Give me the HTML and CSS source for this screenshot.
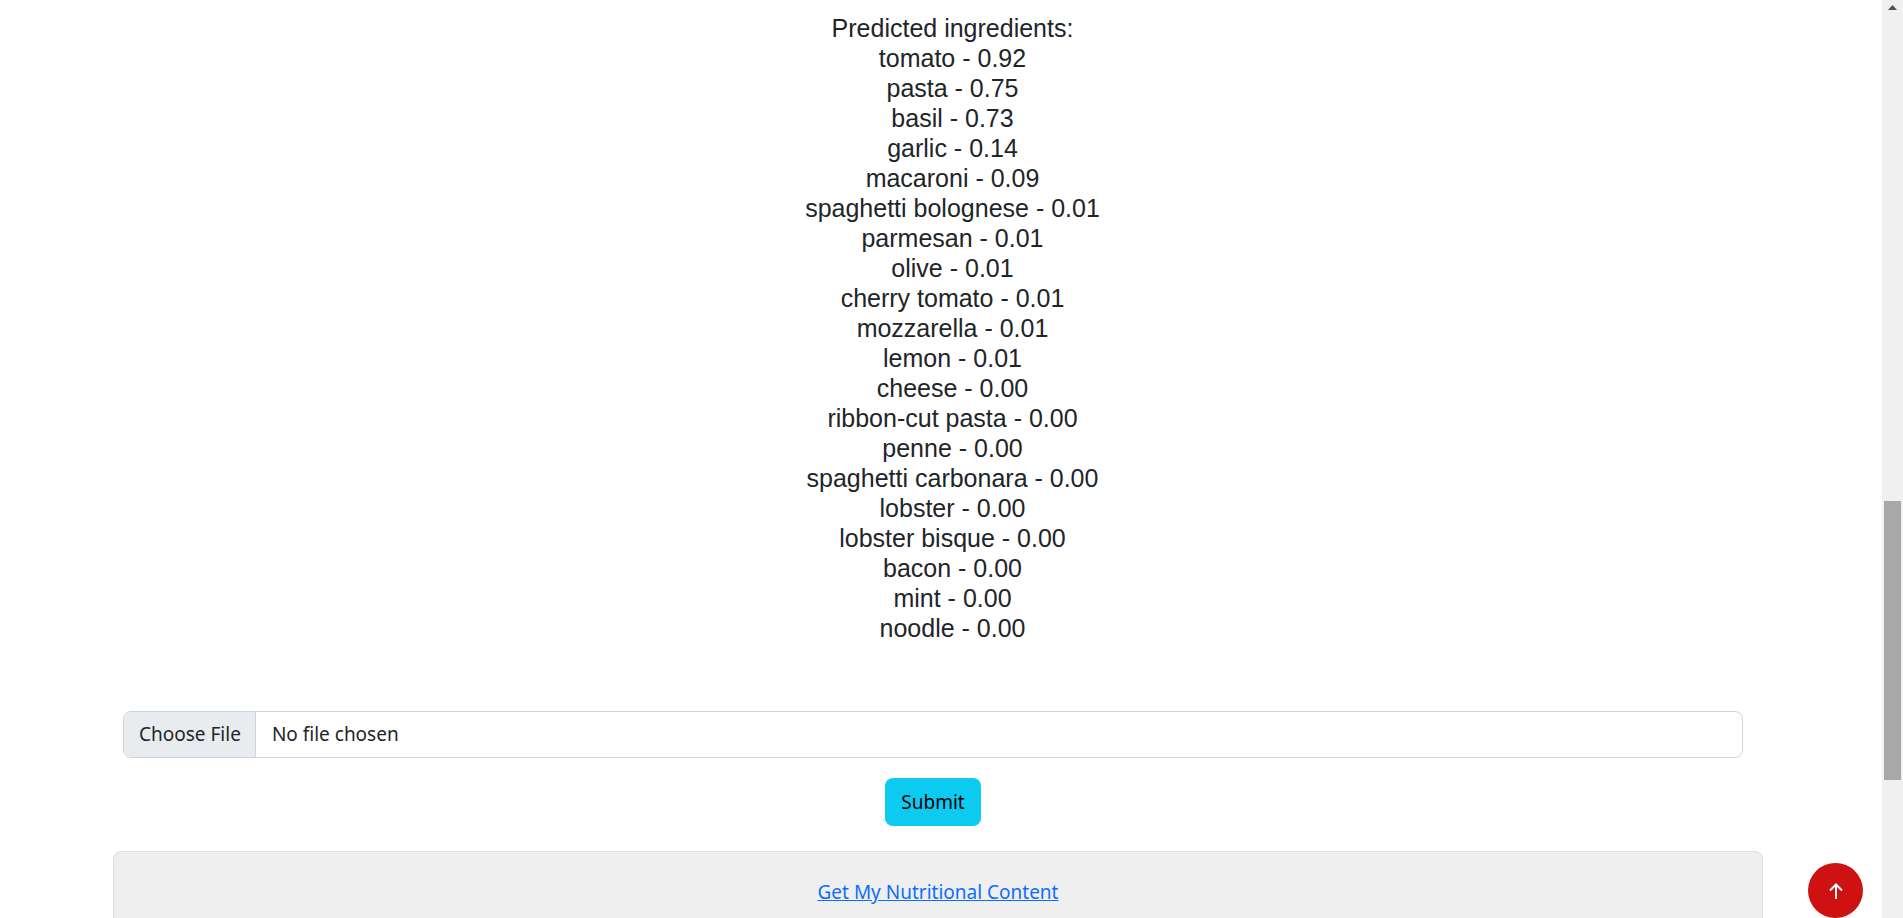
FILE: index.html
```
<!DOCTYPE html>
<html lang="en">
<head>
<meta charset="utf-8">
<meta name="viewport" content="width=device-width, initial-scale=1">
<title>Predicted ingredients</title>
<link rel="stylesheet" href="styles.css">
</head>
<body>
<main class="page">
  <section class="results">
    <h1 class="results-title">Predicted ingredients:</h1>
    <ul class="results-list">
      <li>tomato - 0.92</li>
      <li>pasta - 0.75</li>
      <li>basil - 0.73</li>
      <li>garlic - 0.14</li>
      <li>macaroni - 0.09</li>
      <li>spaghetti bolognese - 0.01</li>
      <li>parmesan - 0.01</li>
      <li>olive - 0.01</li>
      <li>cherry tomato - 0.01</li>
      <li>mozzarella - 0.01</li>
      <li>lemon - 0.01</li>
      <li>cheese - 0.00</li>
      <li>ribbon-cut pasta - 0.00</li>
      <li>penne - 0.00</li>
      <li>spaghetti carbonara - 0.00</li>
      <li>lobster - 0.00</li>
      <li>lobster bisque - 0.00</li>
      <li>bacon - 0.00</li>
      <li>mint - 0.00</li>
      <li>noodle - 0.00</li>
    </ul>
  </section>
  <form class="upload">
    <input class="file-input" type="file" aria-label="Choose a picture">
    <button class="submit" type="submit">Submit</button>
  </form>
  <section class="card">
    <a class="card-link" href="#nutrition">Get My Nutritional Content</a>
  </section>
</main>
<a class="to-top" href="#top" aria-label="Back to top">
  <svg width="14" height="16" viewBox="0 0 14 16" fill="none" stroke="currentColor" stroke-width="2" aria-hidden="true"><path d="M7 16V1.5M1 7.500L7 1.500L13 7.500"/></svg>
</a>
<div class="scrollbar" aria-hidden="true">
  <svg class="scroll-arrow" width="9" height="5" viewBox="0 0 9 5"><path d="M4.500 0L9 5H0Z" fill="#505050"/></svg>
  <div class="scroll-thumb"></div>
</div>
</body>
</html>
```
FILE: styles.css
```
* {
  box-sizing: border-box;
}

html {
  overflow: hidden;
}

body {
  margin: 0;
  height: 100vh;
  overflow: hidden;
  background: #fff;
  color: #212529;
  font-family: "Segoe UI", "Noto Sans", sans-serif;
  font-size: 19px;
  line-height: 30px;
}

.page {
  margin-right: 21px;
  padding: 13px 119px 0 113px;
}

.results {
  padding-left: 29px;
  text-align: center;
  font-family: "Liberation Sans", Arial, sans-serif;
  font-size: 25px;
}

.results-title {
  margin: 0;
  font-size: inherit;
  font-weight: 400;
}

.results-list {
  margin: 0;
  padding: 0;
  list-style: none;
}

.upload {
  display: flex;
  flex-direction: column;
  align-items: center;
  gap: 20px;
  padding: 68px 20px 25px 10px;
}

.file-input {
  width: 100%;
  height: 47px;
  padding: 0;
  overflow: hidden;
  border: 1px solid #ced4da;
  border-radius: 8px;
  background: #fff;
  color: #212529;
  font: inherit;
  line-height: 45px;
}

.file-input::file-selector-button {
  height: 45px;
  margin: 0 16px 0 0;
  padding: 0 14px 0 15px;
  border: 0;
  border-right: 1px solid #ced4da;
  background: #e9ecef;
  color: #212529;
  font: inherit;
}

.submit {
  height: 48px;
  padding: 0 16px;
  border: 0;
  border-radius: 8px;
  background: #0dcaf0;
  color: #000;
  font: inherit;
}

.card {
  padding: 25px 20px;
  border: 1px solid #dfdfdf;
  border-radius: 8px;
  background: #efefef;
  text-align: center;
}

.card-link {
  color: #0d6efd;
}

.to-top {
  position: fixed;
  right: 40px;
  bottom: 0;
  display: flex;
  align-items: center;
  justify-content: center;
  width: 55px;
  height: 55px;
  border-radius: 50%;
  background: #ce1212;
  color: #fff;
}

.scrollbar {
  position: fixed;
  top: 0;
  right: 0;
  bottom: 0;
  width: 21px;
  padding: 0 2px;
  background: #f0f0f0;
}

.scroll-arrow {
  display: block;
  margin: 5px auto 0 4px;
}

.scroll-thumb {
  height: 279px;
  margin-top: 491px;
  background: #a8a8a8;
}
```
